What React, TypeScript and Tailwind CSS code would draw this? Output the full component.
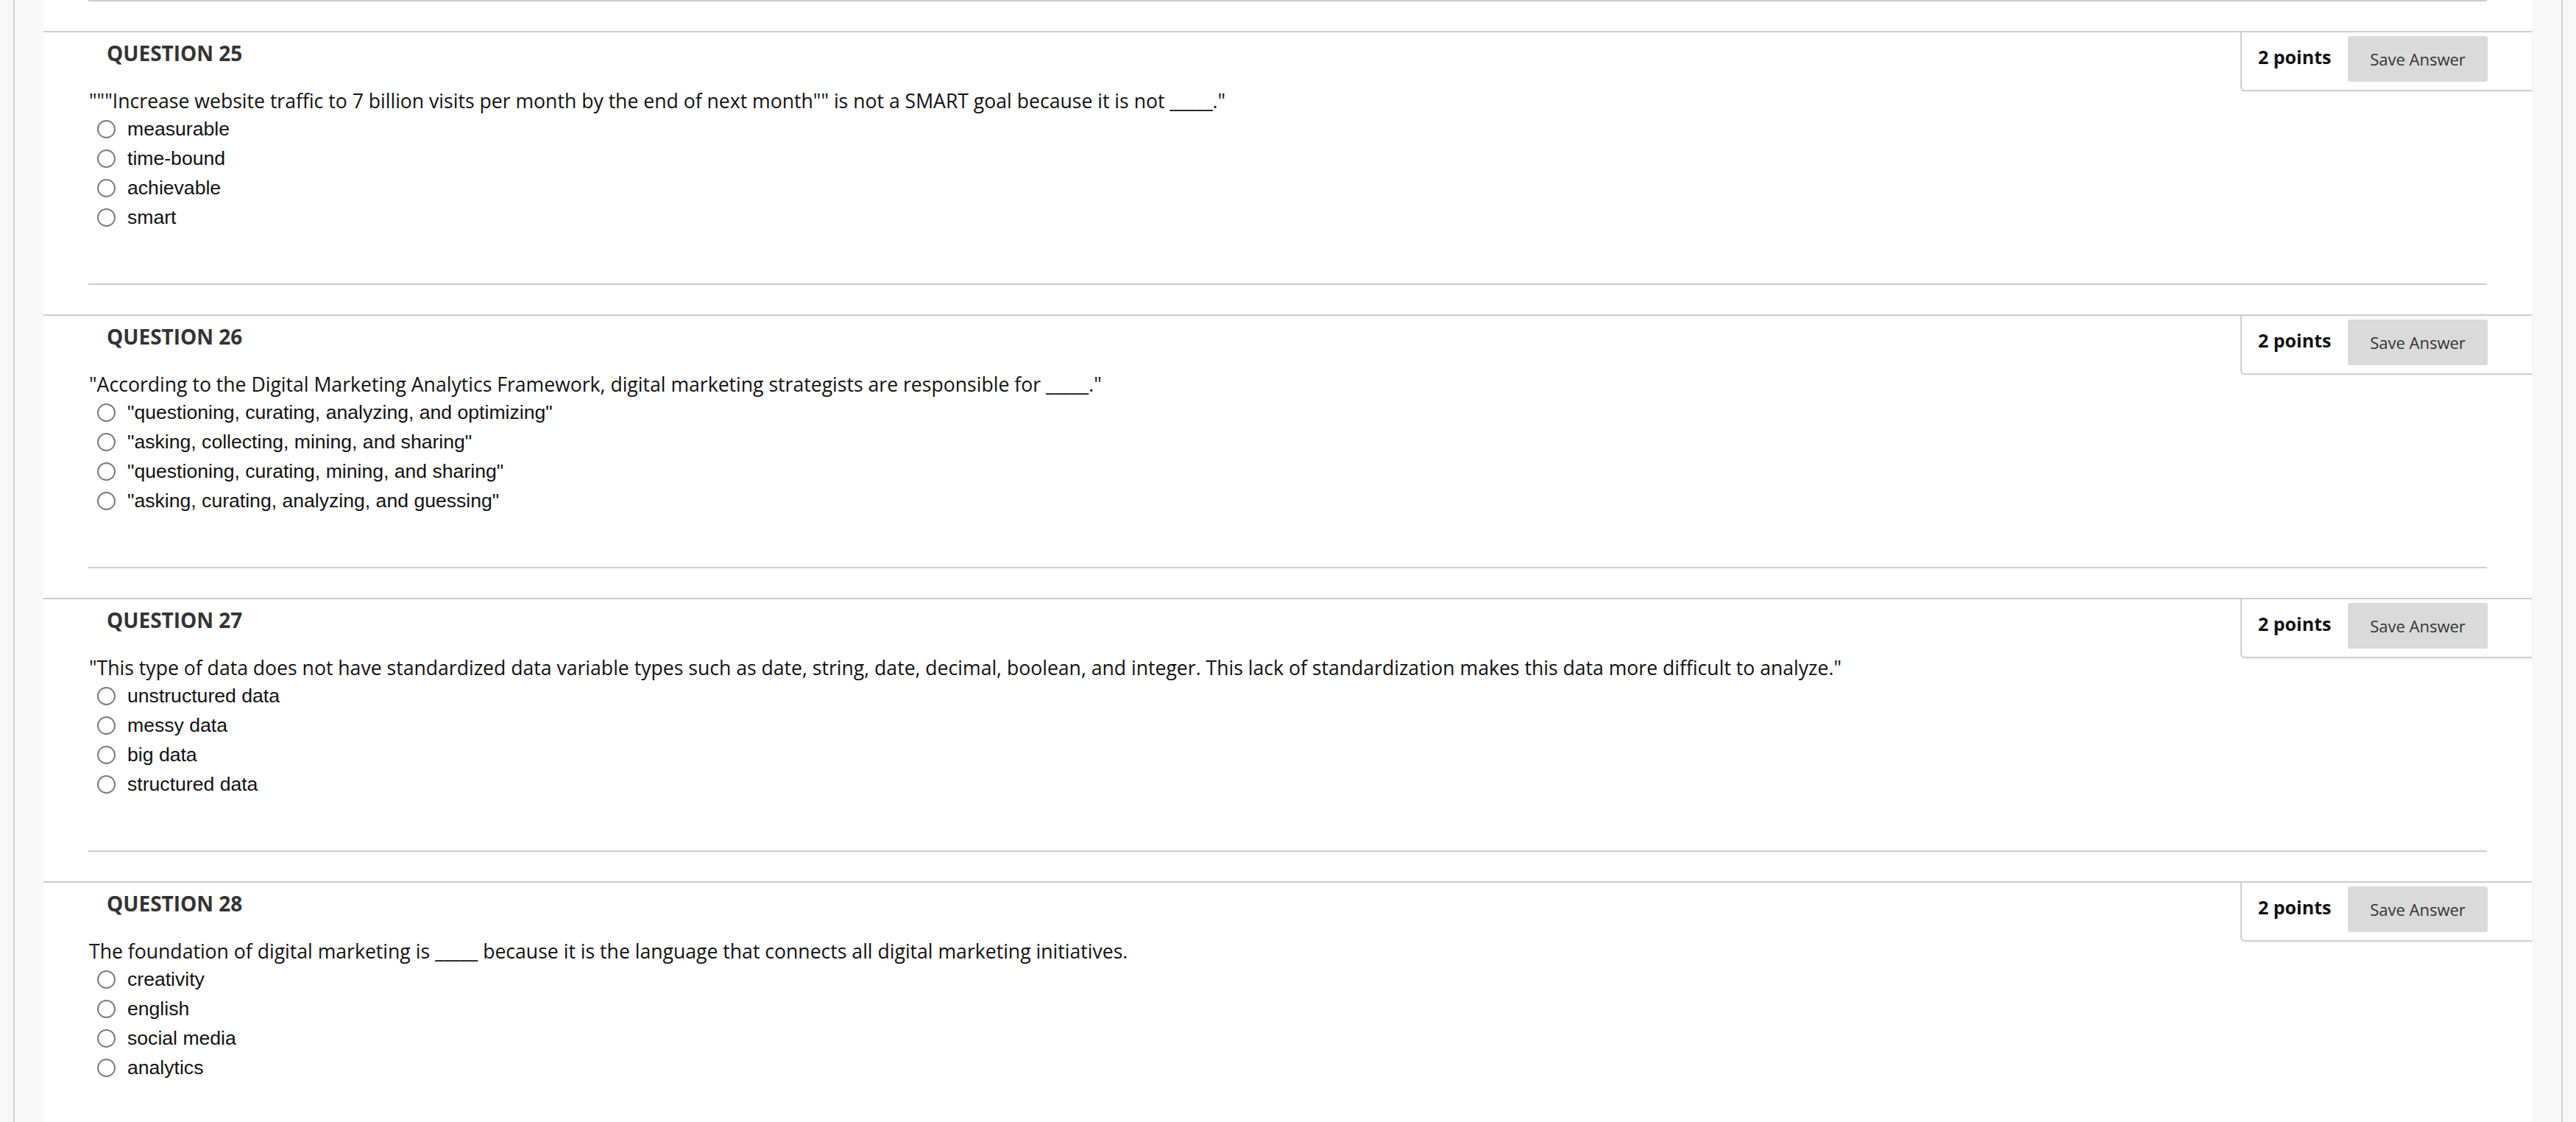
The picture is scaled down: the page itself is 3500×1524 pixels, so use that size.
const questions = [
  {
    number: 25,
    text: '"""Increase website traffic to 7 billion visits per month by the end of next month"" is not a SMART goal because it is not _____."',
    options: ['measurable', 'time-bound', 'achievable', 'smart'],
  },
  {
    number: 26,
    text: '"According to the Digital Marketing Analytics Framework, digital marketing strategists are responsible for _____."',
    options: [
      '"questioning, curating, analyzing, and optimizing"',
      '"asking, collecting, mining, and sharing"',
      '"questioning, curating, mining, and sharing"',
      '"asking, curating, analyzing, and guessing"',
    ],
  },
  {
    number: 27,
    text: '"This type of data does not have standardized data variable types such as date, string, date, decimal, boolean, and integer. This lack of standardization makes this data more difficult to analyze."',
    options: ['unstructured data', 'messy data', 'big data', 'structured data'],
  },
  {
    number: 28,
    text: 'The foundation of digital marketing is _____ because it is the language that connects all digital marketing initiatives.',
    options: ['creativity', 'english', 'social media', 'analytics'],
  },
]

// One quiz question: header rule, title, stem, radio list, points/save box on the right.
function Question({ q }: { q: (typeof questions)[number] }) {
  return (
    <div>
      {/* separator from the previous question */}
      <div className="mx-[61px] h-[2px] bg-[#cdcdcd]" />
      <div className="mt-[40px] flex h-[343px] items-start justify-between border-t-2 border-[#cdcdcd]">
        <div className="pl-[62px] pt-[9px]">
          <h3 className="ml-[24px] font-['Open_Sans',sans-serif] text-[28px] leading-[38px] font-bold text-[#333]">
            QUESTION {q.number}
          </h3>
          <p className="mt-[28px] font-['Open_Sans',sans-serif] text-[26.6px] leading-[36px] text-[#111]">{q.text}</p>
          <ul className="pl-[11px]">
            {q.options.map((opt) => (
              <li key={opt} className="flex h-[40px] items-center gap-[16px]">
                <span className="h-[25px] w-[25px] shrink-0 rounded-full border-2 border-[#7b7b7b] bg-white" />
                <span className="font-['Liberation_Sans',Arial,sans-serif] text-[26.6px] leading-[40px] text-[#111]">
                  {opt}
                </span>
              </li>
            ))}
          </ul>
        </div>

        <div className="flex h-[80px] w-[396px] shrink-0 items-center rounded-bl-[6px] border-b-2 border-l-2 border-[#cfcfcf] pb-[6px] pl-[22px] pr-[60px] shadow-[0_1px_3px_rgba(0,0,0,0.06)]">
          <span className="pb-[6px] font-['Open_Sans',sans-serif] text-[25px] leading-[34px] font-bold whitespace-nowrap text-[#111]">
            2 points
          </span>
          <button className="ml-auto h-[62px] w-[190px] rounded-[3px] bg-[#dadada] font-['Open_Sans',sans-serif] text-[22px] text-[#333]">
            Save Answer
          </button>
        </div>
      </div>
    </div>
  )
}

export default function App() {
  return (
    <div className="flex h-[1524px] w-full overflow-hidden bg-[#f8f8f8]">
      {/* left gutter with the thin page rule */}
      <div className="w-[59px] shrink-0">
        <div className="ml-[18px] h-full w-[2px] bg-[#d0d0d0]" />
      </div>

      <div className="flex-1 bg-white">
        {questions.map((q) => (
          <Question key={q.number} q={q} />
        ))}
      </div>

      <div className="w-[60px] shrink-0">
        <div className="ml-[40px] h-full w-[2px] bg-[#d0d0d0]" />
      </div>
    </div>
  )
}
